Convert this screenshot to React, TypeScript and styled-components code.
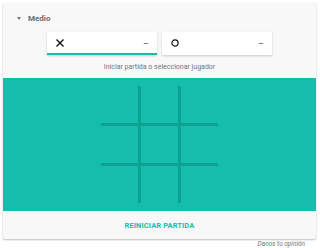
import React from "react";
import styled, { createGlobalStyle } from "styled-components";

const Global = createGlobalStyle`
  html, body { margin: 0; padding: 0; background: #ffffff; }
  body { font-family: Roboto, "Liberation Sans", Arial, sans-serif; width: 320px; height: 248px; overflow: hidden; }
`;

const Card = styled.div`
  margin: 3px 4px 0 3px;
  background: #f8f8f8;
  border-radius: 2px;
  box-shadow: 0 1px 2px rgba(0, 0, 0, 0.25), 0 0 1px rgba(0, 0, 0, 0.12);
  display: flex;
  flex-direction: column;
`;

const Header = styled.div`
  display: flex;
  align-items: center;
  height: 12px;
  margin-top: 9px;
  padding-left: 14px;
  gap: 7px;
  font-size: 8px;
  font-weight: 700;
  color: #6b6b6b;
`;

const Caret = styled.span`
  width: 0;
  height: 0;
  border-left: 2px solid transparent;
  border-right: 2px solid transparent;
  border-top: 3px solid #777;
`;

const Players = styled.div`
  display: flex;
  justify-content: center;
  gap: 5px;
  margin-top: 8px;
`;

const PlayerBox = styled.div<{ $active?: boolean }>`
  width: 110px;
  height: 23px;
  box-sizing: border-box;
  background: #ffffff;
  box-shadow: 0 1px 2px rgba(0, 0, 0, 0.18);
  border-bottom: 2px solid ${(p) => (p.$active ? "#14bdac" : "transparent")};
  display: flex;
  align-items: center;
  justify-content: space-between;
  padding: ${(p) => (p.$active ? "1px" : "0")} 8px 0 9px;
`;

const Score = styled.span`
  font-size: 9px;
  color: #5f5750;
  line-height: 1;
  padding-top: 3px;
`;

const Hint = styled.div`
  margin-top: 7px;
  height: 10px;
  line-height: 10px;
  text-align: center;
  font-size: 7px;
  color: #757575;
`;

const Board = styled.div`
  margin-top: 6px;
  height: 133px;
  background: #14bdac;
  display: flex;
  align-items: center;
  justify-content: center;
`;

const Grid = styled.div`
  display: grid;
  grid-template-columns: repeat(3, 37px);
  grid-template-rows: repeat(3, 37px);
  gap: 3px;
  background: #0da192;
`;

const Cell = styled.div`
  background: #14bdac;
`;

const ButtonRow = styled.div`
  height: 28px;
  display: flex;
  align-items: center;
  justify-content: center;
`;

const Restart = styled.button`
  border: 0;
  background: transparent;
  padding: 0;
  font-family: Roboto, "Liberation Sans", Arial, sans-serif;
  font-size: 7.5px;
  font-weight: 700;
  color: #14bdac;
  letter-spacing: 0.1px;
  cursor: pointer;
`;

const Feedback = styled.div`
  height: 10px;
  line-height: 10px;
  text-align: right;
  padding-right: 15px;
  font-size: 6.5px;
  font-style: italic;
  color: #757575;
`;

const XMark = () => (
  <svg width="8" height="8" viewBox="0 0 8 8">
    <path d="M1 1 L7 7 M7 1 L1 7" stroke="#111" strokeWidth="1.35" strokeLinecap="square" />
  </svg>
);

const OMark = () => (
  <svg width="8" height="8" viewBox="0 0 8 8">
    <circle cx="4" cy="4" r="3.1" fill="none" stroke="#111" strokeWidth="1.2" />
  </svg>
);

export default function App() {
  return (
    <>
      <Global />
      <Card>
        <Header>
          <Caret />
          Medio
        </Header>
        <Players>
          <PlayerBox $active>
            <XMark />
            <Score>–</Score>
          </PlayerBox>
          <PlayerBox>
            <OMark />
            <Score>–</Score>
          </PlayerBox>
        </Players>
        <Hint>Iniciar partida o seleccionar jugador</Hint>
        <Board>
          <Grid>
            {Array.from({ length: 9 }).map((_, i) => (
              <Cell key={i} />
            ))}
          </Grid>
        </Board>
        <ButtonRow>
          <Restart>REINICIAR PARTIDA</Restart>
        </ButtonRow>
      </Card>
      <Feedback>Danos tu opinión</Feedback>
    </>
  );
}
